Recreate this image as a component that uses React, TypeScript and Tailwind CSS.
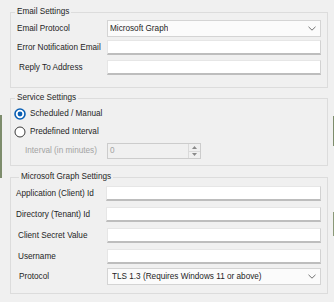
import type { ReactNode } from "react";

function GroupBox({
  title,
  legendClass = "",
  className = "",
  children,
}: {
  title: string;
  legendClass?: string;
  className?: string;
  children: ReactNode;
}) {
  return (
    <fieldset className={`border border-[#dcdcdc] pl-[6px] pr-[6px] ${className}`}>
      <legend className={`-ml-[2px] px-[2px] leading-[12px] text-[#1e1e1e] ${legendClass}`}>
        {title}
      </legend>
      {children}
    </fieldset>
  );
}

function Chevron() {
  return (
    <svg width="8" height="5" viewBox="0 0 8 5" className="shrink-0">
      <path d="M0.5 0.8 L4 4.2 L7.5 0.8" fill="none" stroke="#707070" strokeWidth="1" />
    </svg>
  );
}

function ComboBox({ value, textPad = "pl-[2px]" }: { value: string; textPad?: string }) {
  return (
    <div
      className={`flex h-[17px] flex-1 items-center justify-between border border-[#d4d4d4] bg-[#fbfbfb] pr-[4px] ${textPad}`}
    >
      <span className="truncate text-[#1e1e1e]">{value}</span>
      <Chevron />
    </div>
  );
}

function TextBox() {
  return (
    <div className="h-[15px] flex-1 border border-b-2 border-[#e6e6e6] border-r-[#d2d2d2] border-b-[#bdbdbd] bg-white" />
  );
}

function Row({
  label,
  labelPad = "",
  className = "",
  children,
}: {
  label: string;
  labelPad?: string;
  className?: string;
  children: ReactNode;
}) {
  return (
    <div className={`flex items-center ${className}`}>
      <span className={`w-[90px] shrink-0 whitespace-nowrap text-[#1e1e1e] ${labelPad}`}>{label}</span>
      {children}
    </div>
  );
}

function Radio({ checked, label, className = "" }: { checked: boolean; label: string; className?: string }) {
  return (
    <div className={`-ml-[3px] flex h-[14px] items-center gap-[4px] ${className}`}>
      <svg width="12" height="12" viewBox="0 0 12 12" className="shrink-0">
        {checked ? (
          <>
            <circle cx="6" cy="6" r="5" fill="white" stroke="#0a5fb4" strokeWidth="1.6" />
            <circle cx="6" cy="6" r="2.4" fill="#0a5fb4" />
          </>
        ) : (
          <circle cx="6" cy="6" r="5" fill="white" stroke="#3a3a3a" strokeWidth="1" />
        )}
      </svg>
      <span className="text-[#1e1e1e]">{label}</span>
    </div>
  );
}

function SpinBox({ value }: { value: string }) {
  return (
    <div className="flex h-[16px] w-[94px] items-stretch border border-[#cccccc] bg-[#f0f0f0]">
      <span className="flex flex-1 items-center pl-[2px] text-[#a3a3a3]">{value}</span>
      <div className="flex w-[12px] flex-col border-l border-[#dadada]">
        <div className="flex flex-1 items-center justify-center">
          <svg width="5" height="3" viewBox="0 0 5 3">
            <path d="M0 3 L2.5 0 L5 3 Z" fill="#8a8a8a" />
          </svg>
        </div>
        <div className="flex flex-1 items-center justify-center border-t border-[#dadada]">
          <svg width="5" height="3" viewBox="0 0 5 3">
            <path d="M0 0 L2.5 3 L5 0 Z" fill="#8a8a8a" />
          </svg>
        </div>
      </div>
    </div>
  );
}

export default function App() {
  return (
    <div className="relative h-[302px] w-[334px] overflow-hidden bg-[#f0f0f0] pl-[10px] pr-[6px] pt-[6px] font-['Liberation_Sans',Arial,sans-serif] text-[8.2px] leading-[12px] antialiased">
      {/* bits of the desktop showing past the window edge */}
      <div className="absolute left-0 top-[115px] h-[63px] w-[2px] bg-[#7d8c6c]" />
      <div className="absolute right-0 top-[116px] h-[30px] w-[1px] bg-[#7d8c6c]" />
      <div className="absolute right-0 top-[212px] h-[24px] w-[1px] bg-[#8a9878]" />

      <GroupBox title="Email Settings">
        <Row label="Email Protocol" className="mt-[2px]">
          <ComboBox value="Microsoft Graph" />
        </Row>
        <Row label="Error Notification Email" className="mt-[3px]">
          <TextBox />
        </Row>
        <Row label="Reply To Address" labelPad="pl-[2px]" className="mt-[5px] pb-[12px]">
          <TextBox />
        </Row>
      </GroupBox>

      <GroupBox title="Service Settings" className="mt-[4px]">
        <Radio checked label="Scheduled / Manual" className="mt-[3px]" />
        <Radio checked={false} label="Predefined Interval" className="mt-[4px]" />
        <div className="mt-[4px] flex items-center pb-[6px]">
          <span className="w-[90px] shrink-0 pl-[8px] text-[#a3a3a3]">Interval (in minutes)</span>
          <SpinBox value="0" />
        </div>
      </GroupBox>

      <GroupBox title="Microsoft Graph Settings" legendClass="ml-[2px]" className="mt-[5px]">
        <Row label="Application (Client) Id" labelPad="-ml-[1px]" className="mt-[3px]">
          <TextBox />
        </Row>
        <Row label="Directory (Tenant) Id" labelPad="-ml-[1px]" className="mt-[6px]">
          <TextBox />
        </Row>
        <Row label="Client Secret Value" labelPad="pl-[1px]" className="mt-[6px]">
          <TextBox />
        </Row>
        <Row label="Username" labelPad="pl-[1px]" className="mt-[6px]">
          <TextBox />
        </Row>
        <Row label="Protocol" labelPad="pl-[2px]" className="mt-[4px] pb-[8px]">
          <ComboBox value="TLS 1.3 (Requires Windows 11 or above)" textPad="pl-[4px]" />
        </Row>
      </GroupBox>
    </div>
  );
}
